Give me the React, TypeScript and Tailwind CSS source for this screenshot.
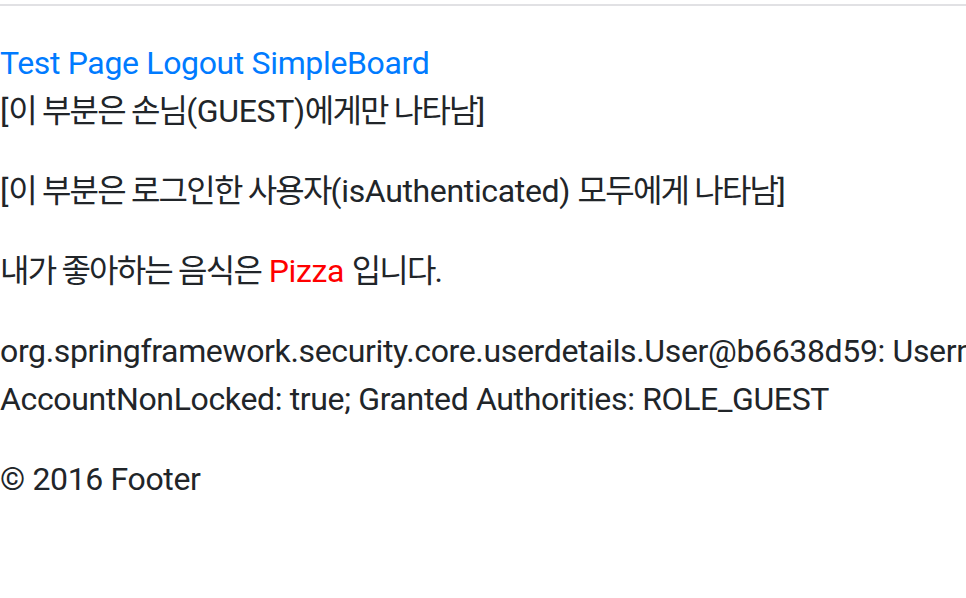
const Ko = ({ children }: { children: React.ReactNode }) => (
  <span className="tracking-[-1.8px]">{children}</span>
);

export default function App() {
  return (
    <div
      className="w-[966px] h-[598px] overflow-hidden bg-white text-[32px] leading-[48px] tracking-[-0.35px] text-[#212529]"
      style={{ fontFamily: 'Roboto, "Noto Sans CJK KR", sans-serif' }}
    >
      <div className="h-[4px]" />
      <div className="border-t-2 border-[#e1e1e4]" />

      <div className="mt-[33px]">
        <a href="#" className="text-[#007bff]">Test Page</a>{" "}
        <a href="#" className="text-[#007bff]">Logout</a>{" "}
        <a href="#" className="text-[#007bff]">SimpleBoard</a>
      </div>

      <div className="mb-8">
        [<Ko>이 부분은 손님</Ko>(GUEST)<Ko>에게만 나타남</Ko>]
      </div>

      <p className="mb-8">
        [<Ko>이 부분은 로그인한 사용자</Ko>(isAuthenticated) <Ko>모두에게 나타남</Ko>]
      </p>

      <p className="mb-8">
        <Ko>내가 좋아하는 음식은</Ko> <span className="text-[#ff0000]">Pizza</span> <Ko>입니다</Ko>.
      </p>

      <p className="mb-8">
        <span className="block whitespace-nowrap">
          org.springframework.security.core.userdetails.User@b6638d59: Username: guest; Password: [PROTECTED]; Enabled: true; AccountNonExpired: true; credentialsNonExpired: true;
        </span>
        <span className="block">AccountNonLocked: true; Granted Authorities: ROLE_GUEST</span>
      </p>

      <footer>© 2016 Footer</footer>
    </div>
  );
}
